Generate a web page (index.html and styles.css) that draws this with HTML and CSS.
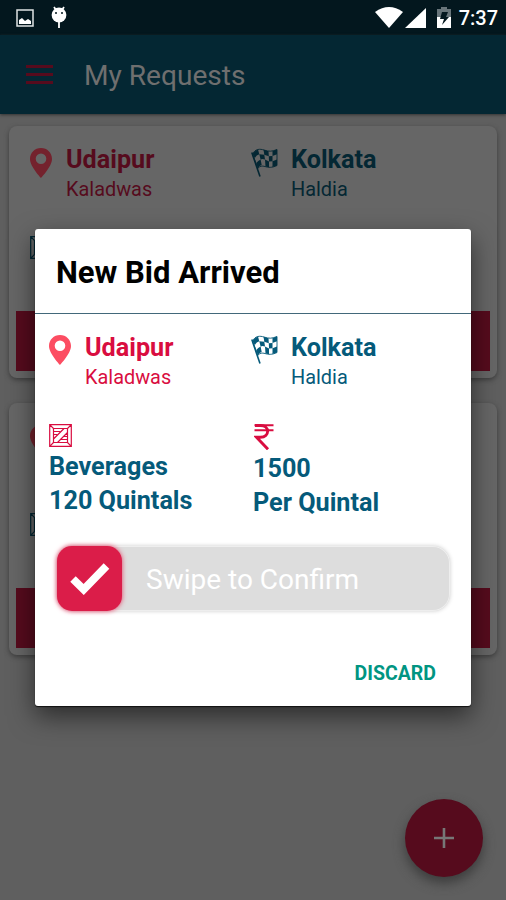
FILE: index.html
```html
<!DOCTYPE html>
<html lang="en">
<head>
<meta charset="utf-8">
<title>My Requests</title>
<link rel="stylesheet" href="styles.css">
</head>
<body>
<svg class="defs" aria-hidden="true">
  <symbol id="pin" viewBox="0 0 22 30"><path fill-rule="evenodd" d="M11 0C4.800 0 0 4.800 0 11c0 7.500 11 19 11 19s11-11.500 11-19C22 4.800 17.200 0 11 0zm0 5.500a5.300 5.300 0 1 1 0 10.600a5.300 5.300 0 0 1 0-10.600z"/></symbol>
  <symbol id="flag" viewBox="0 0 28 30">
    <path d="M.8 4.500L9 28.500" fill="none" stroke="currentColor" stroke-width="1.600"/>
    <path d="M1.500 6C4.500 .5 9 .8 13 2C18 3.800 21 3.500 26 1.500L26 17.500C21 20 17 19.500 14 18.500C11 17.600 9 18 6.800 20.300Z" fill="none" stroke="currentColor" stroke-width=".9"/>
    <path fill="currentColor" d="M1.500 6Q4 2.500 7 1.500L8.300 6.300Q5.500 7 3.800 10zM12.500 1.800L17.500 3.300L17.800 8.300L13.300 6.800zM21.500 3L26 1.500V6.300L21.500 8zM8.300 6.300L13.300 6.800L14 11.500Q11.500 10.700 9.600 11.500zM17.800 8.300L21.500 8V13.300L18 13.500zM5.300 15Q7 12.500 9.600 11.500L10.700 17Q8.500 17.500 6.800 20.300zM14 11.500L18 13.500V19.200L14.500 18.400zM21.500 13.300L26 11.500V17.500L21.500 19z"/>
  </symbol>
  <symbol id="crate" viewBox="0 0 23 23"><path fill="none" stroke="currentColor" stroke-width="1.200" d="M.7.700h21.600v21.600H.7zM4.500 4.500h14v14h-14zM.7.700l3.800 3.800M22.300.700l-3.800 3.800M.7 22.300l3.800-3.800M22.300 22.300l-3.800-3.800M4.500 15L15 4.500M8.500 18.500L18.500 8.500"/><path fill="none" stroke="currentColor" stroke-width="1.200" d="M5 7.500h6.500M5 10.500h3.500M15 12.500h3.500M12 15.500h6.500"/></symbol>
</svg>

<div class="app">
  <header class="status">
    <svg width="18" height="18" viewBox="0 0 18 18"><path d="M1 1h16v16H1z" fill="none" stroke="#dfe3e4" stroke-width="1.500"/><path fill="#fff" d="M3 15v-4l3-2 3 3 3-2 3 2v3z"/></svg>
    <svg class="bug" width="16" height="23" viewBox="0 0 16 23"><path d="M3 1l2 3M13 1l-2 3M8 15v7" stroke="#fff" stroke-width="1.800"/><circle cx="8" cy="9" r="7.400" fill="#fff"/><path d="M4 7h2M10 7h2" stroke="#03171e" stroke-width="1.500"/></svg>
    <svg class="wifi" width="28" height="21" viewBox="0 0 28 21"><path fill="#fff" d="M0 5Q14-5 28 5L14 21z"/></svg>
    <svg class="signal" width="21" height="20" viewBox="0 0 21 20"><path fill="#fff" d="M21 0v20H0z"/></svg>
    <svg class="battery" width="14" height="21" viewBox="0 0 14 21"><path fill="#68757a" d="M0 2h4V0h6v2h4v8H0z"/><path fill="#fff" d="M0 10h14v11H0z"/><path fill="#03171e" d="M5 5h6L9 10h3L5 18l2-6H3z"/></svg>
    <span class="clock">7:37</span>
  </header>
  <nav class="toolbar"><span class="menu"><i></i><i></i><i></i></span><h1>My Requests</h1></nav>
  <main class="list">
    <article class="card">
      <div class="route">
        <div class="stop origin"><svg class="pin"><use href="#pin"/></svg><div><b>Udaipur</b><span>Kaladwas</span></div></div>
        <div class="stop dest"><svg class="flag"><use href="#flag"/></svg><div><b>Kolkata</b><span>Haldia</span></div></div>
      </div>
      <svg class="crate"><use href="#crate"/></svg>
      <div class="bar"></div>
    </article>
    <article class="card">
      <div class="route">
        <div class="stop origin"><svg class="pin"><use href="#pin"/></svg></div>
      </div>
      <svg class="crate"><use href="#crate"/></svg>
      <div class="bar"></div>
    </article>
  </main>
  <div class="fab"><svg width="20" height="20"><path d="M10 0v20M0 10h20" stroke="#777" stroke-width="2.600"/></svg></div>
</div>

<section class="dialog">
  <h2>New Bid Arrived</h2>
  <div class="route">
    <div class="stop origin"><svg class="pin"><use href="#pin"/></svg><div><b>Udaipur</b><span>Kaladwas</span></div></div>
    <div class="stop dest"><svg class="flag"><use href="#flag"/></svg><div><b>Kolkata</b><span>Haldia</span></div></div>
  </div>
  <div class="facts">
    <div><svg class="crate"><use href="#crate"/></svg><p>Beverages</p><p>120 Quintals</p></div>
    <div class="price"><svg class="rupee" viewBox="0 0 20 26"><path fill="none" stroke="currentColor" stroke-width="2" d="M.5 1.200h19M.5 6.200h19"/><path d="M1 1.500h5.500c9.500 0 9.500 11.700 0 11.700H2.500L14 25.300" fill="none" stroke="currentColor" stroke-width="2.900"/></svg><p>1500</p><p>Per Quintal</p></div>
  </div>
  <div class="swipe">
    <div class="thumb"><svg width="40" height="33" viewBox="0 0 40 33"><path d="M3 17L13.700 27.500L36.500 4" fill="none" stroke="#fff" stroke-width="7.800"/></svg></div>
    <span>Swipe to Confirm</span>
  </div>
  <div class="actions"><span>DISCARD</span></div>
</section>
</body>
</html>
```
FILE: styles.css
```css
* { box-sizing: border-box; }
body { margin: 0; width: 506px; height: 900px; overflow: hidden; background: #5f5f5f; font-family: Roboto, sans-serif; }
.defs { position: absolute; width: 0; height: 0; }
h1, h2, p { margin: 0; }
svg { display: block; flex: none; }
.app { height: 900px; display: flex; flex-direction: column; }
.status { height: 35px; background: #03171e; display: flex; align-items: center; padding: 0 8px 0 16px; }
.bug { margin-left: 17px; }
.wifi { margin-left: auto; }
.signal { margin-left: 2px; }
.battery { margin-left: 11px; }
.clock { margin-left: 8px; color: #fff; font-size: 20px; font-weight: 500; line-height: 37px; padding-top: 2px; }
.toolbar { height: 79px; flex: none; background: #042733; display: flex; align-items: center; padding: 0 26px; box-shadow: 0 1px 3px #333; }
.menu { width: 27px; display: flex; flex-direction: column; gap: 5px; margin-top: -1px; }
.menu i { height: 3px; background: #560b1d; }
.toolbar h1 { margin-left: 31px; font-size: 28.100px; font-weight: 400; color: #6f6f6f; margin-top: 2px; }
.list { padding: 12px 9px; display: flex; flex-direction: column; gap: 25px; }
.card { height: 252px; background: #666; border-radius: 8px; padding: 20px 7px 7px; display: flex; flex-direction: column; box-shadow: 0 2px 5px #3d3d3d; }
.card .bar { height: 60px; background: #560b1d; margin-top: auto; }
.card .route { height: 90px; padding: 2px 0 0 14px; }
.card .crate { margin-left: 14px; color: #042733; }
.route { display: flex; }
.stop { display: flex; flex: none; }
.stop > div { margin-top: -1px; }
.stop b { display: block; font-size: 25.200px; line-height: 28px; font-weight: 700; }
.stop span { display: block; font-size: 19.900px; line-height: 32px; }
.origin { width: 202px; color: #d90d40; }
.pin { width: 22px; height: 30px; fill: #fc4d62; margin-right: 14px; }
.dest { color: #055a7a; }
.flag { width: 28px; height: 30px; margin-right: 12px; }
.crate { width: 23px; height: 23px; }
.card .stop > div { margin-top: -2px; }
.card .origin { width: 221px; color: #560b1d; }
.card .pin { fill: #74222d; }
.card .dest { color: #042733; }
.fab { position: absolute; left: 405px; top: 799px; width: 78px; height: 78px; border-radius: 50%; background: #560b1d; display: flex; align-items: center; justify-content: center; box-shadow: 0 6px 12px #3c3c3c; }
.dialog { position: absolute; left: 35px; top: 229px; width: 436px; height: 477px; background: #fff; border-radius: 3px; display: flex; flex-direction: column; box-shadow: 0 1px 1px #111, 0 10px 26px rgba(0,0,0,.55); }
.dialog h2 { height: 85px; flex: none; padding-left: 21px; line-height: 88px; font-size: 31px; font-weight: 700; color: #000; border-bottom: 1px solid #42687a; }
.dialog .route { padding: 21px 0 0 14px; height: 110px; flex: none; }
.facts { display: flex; padding-left: 14px; color: #055a7a; font-size: 25.200px; font-weight: 700; line-height: 34px; height: 122px; flex: none; }
.facts > div { width: 204px; }
.facts .crate { color: #d90d40; margin-bottom: 3px; }
.rupee { width: 20px; height: 26px; color: #d90d40; margin: 0 0 2px 1px; }
.facts p { white-space: nowrap; }
.swipe { width: 393px; height: 65px; margin-left: 22px; flex: none; background: #ddd; border-radius: 17px; display: flex; align-items: center; box-shadow: inset 0 0 0 1px #eee, 0 0 4px #ccc; font-size: 28px; color: #fff; }
.thumb { width: 65px; height: 65px; border-radius: 15px; background: #db1d49; display: flex; align-items: center; justify-content: center; box-shadow: 0 0 5px #e63b61; }
.swipe span { margin: 2px 0 0 24px; }
.actions { flex: 1; text-align: right; padding: 49px 35px 0 0; font-size: 19.500px; font-weight: 700; line-height: 28px; color: #009582; }
```
